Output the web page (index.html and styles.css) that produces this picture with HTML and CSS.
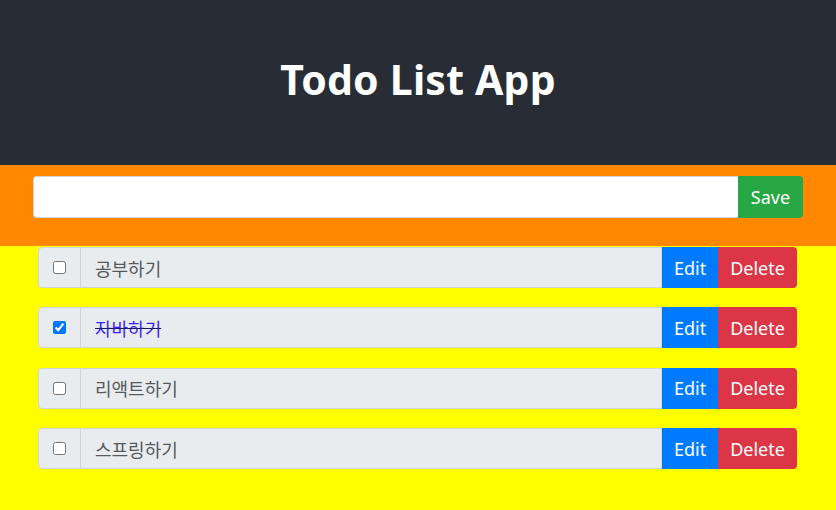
FILE: index.html
```html
<!DOCTYPE html>
<html lang="ko">
<head>
<meta charset="utf-8">
<title>Todo List App</title>
<link rel="stylesheet" href="styles.css">
</head>
<body>
<header class="app-header">
  <h1 class="app-title">Todo List App</h1>
</header>
<form class="todo-form">
  <div class="input-group">
    <input class="form-control" type="text">
    <button class="btn btn-save" type="button">Save</button>
  </div>
</form>
<ul class="todo-list">
  <li class="todo-item">
    <div class="addon"><input type="checkbox"></div>
    <div class="todo-text">공부하기</div>
    <button class="btn btn-edit" type="button">Edit</button>
    <button class="btn btn-delete" type="button">Delete</button>
  </li>
  <li class="todo-item">
    <div class="addon"><input type="checkbox" checked></div>
    <div class="todo-text done">자바하기</div>
    <button class="btn btn-edit" type="button">Edit</button>
    <button class="btn btn-delete" type="button">Delete</button>
  </li>
  <li class="todo-item">
    <div class="addon"><input type="checkbox"></div>
    <div class="todo-text">리액트하기</div>
    <button class="btn btn-edit" type="button">Edit</button>
    <button class="btn btn-delete" type="button">Delete</button>
  </li>
  <li class="todo-item">
    <div class="addon"><input type="checkbox"></div>
    <div class="todo-text">스프링하기</div>
    <button class="btn btn-edit" type="button">Edit</button>
    <button class="btn btn-delete" type="button">Delete</button>
  </li>
</ul>
</body>
</html>
```

FILE: styles.css
```css
* { box-sizing: border-box; }
html, body {
  margin: 0;
  padding: 0;
  height: 100%;
}
body {
  background: #ffff00;
  font-family: "Noto Sans", "Noto Sans CJK KR", sans-serif;
  font-size: 18px;
  color: #495057;
}
.app-header {
  background: #282c34;
  height: 165px;
  display: flex;
  align-items: center;
  justify-content: center;
}
.app-title {
  margin: 0;
  color: #ffffff;
  font-family: "Noto Sans", sans-serif;
  font-weight: 700;
  font-size: 41px;
  line-height: 1;
  padding-bottom: 6px;
  letter-spacing: 0.2px;
}
.todo-form {
  background: #ff8800;
  margin: 0;
  padding: 11px 33px 28px 33px;
}
.input-group {
  display: flex;
  height: 42px;
}
.form-control {
  flex: 1;
  margin: 0;
  border: 1px solid #ced4da;
  border-right: none;
  border-radius: 4px 0 0 4px;
  background: #fff;
  font-size: 18px;
  padding: 6px 12px;
  outline: none;
}
.btn {
  border: none;
  margin: 0;
  color: #fff;
  font-family: "Noto Sans", sans-serif;
  font-size: 18px;
  padding: 0 12px;
  cursor: pointer;
  line-height: 1;
}
.btn-save {
  background: #28a745;
  width: 65px;
  border-radius: 0 4px 4px 0;
}
.todo-list {
  list-style: none;
  margin: 0;
  padding: 1px 39px 0 38px;
  display: flex;
  flex-direction: column;
  gap: 19.4px;
}
.todo-item {
  display: flex;
  height: 41px;
}
.addon {
  width: 43px;
  background: #e9ecef;
  border: 1px solid #ced4da;
  border-radius: 4px 0 0 4px;
  display: flex;
  align-items: center;
  justify-content: center;
}
.addon input {
  margin: 0;
  width: 13px;
  height: 13px;
}
.todo-text {
  flex: 1;
  background: #e9ecef;
  border: 1px solid #ced4da;
  margin-left: -1px;
  padding: 0 12px 0 14px;
  display: flex;
  align-items: center;
  font-family: "Noto Sans CJK KR", sans-serif;
  font-size: 18px;
  color: #55595e;
}
.todo-text.done {
  color: #3a1fff;
  text-decoration: line-through;
  text-decoration-color: #1a1a6a;
}
.btn-edit {
  background: #007bff;
  width: 56px;
}
.btn-delete {
  background: #dc3545;
  width: 79px;
  border-radius: 0 4px 4px 0;
}
```
